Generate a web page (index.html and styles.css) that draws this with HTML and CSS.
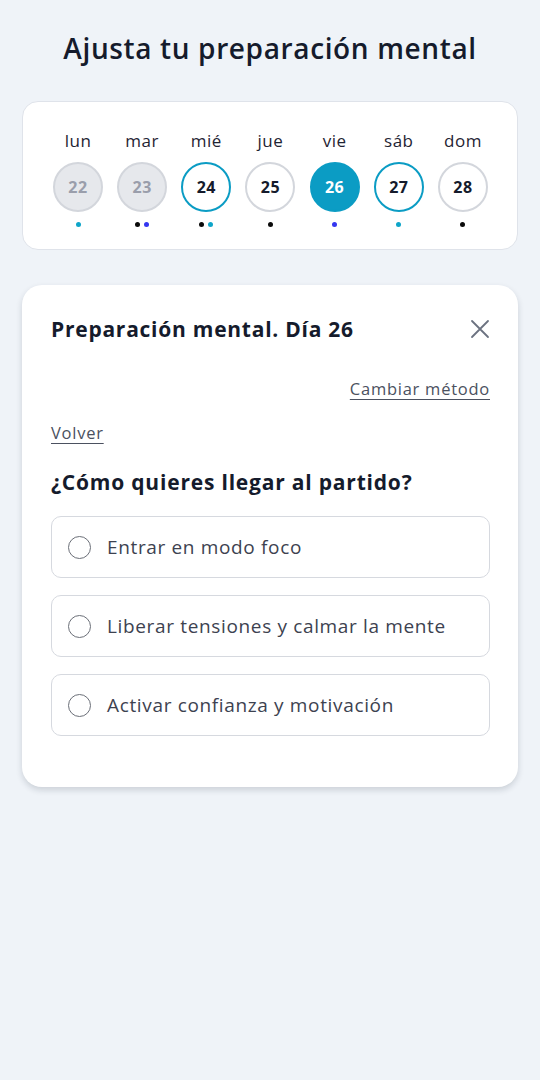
FILE: index.html
```html
<!DOCTYPE html>
<html lang="es">
<head>
<meta charset="utf-8">
<link rel="stylesheet" href="styles.css">
</head>
<body>
<main class="page">
  <h1 class="page-title">Ajusta tu preparación mental</h1>

  <section class="week-card">
    <div class="day">
      <span class="day-name">lun</span>
      <span class="day-num past">22</span>
      <span class="dots"><i class="dot cyan"></i></span>
    </div>
    <div class="day">
      <span class="day-name">mar</span>
      <span class="day-num past">23</span>
      <span class="dots"><i class="dot black"></i><i class="dot blue"></i></span>
    </div>
    <div class="day">
      <span class="day-name">mié</span>
      <span class="day-num marked">24</span>
      <span class="dots"><i class="dot black"></i><i class="dot cyan"></i></span>
    </div>
    <div class="day">
      <span class="day-name">jue</span>
      <span class="day-num">25</span>
      <span class="dots"><i class="dot black"></i></span>
    </div>
    <div class="day">
      <span class="day-name">vie</span>
      <span class="day-num selected">26</span>
      <span class="dots"><i class="dot blue"></i></span>
    </div>
    <div class="day">
      <span class="day-name">sáb</span>
      <span class="day-num marked">27</span>
      <span class="dots"><i class="dot cyan"></i></span>
    </div>
    <div class="day">
      <span class="day-name">dom</span>
      <span class="day-num">28</span>
      <span class="dots"><i class="dot black"></i></span>
    </div>
  </section>

  <section class="detail-card">
    <header class="detail-header">
      <h2 class="detail-title">Preparación mental. Día 26</h2>
      <button class="close-btn" aria-label="Cerrar">
        <svg width="20" height="20" viewBox="0 0 20 20" fill="none" stroke="#6b7280" stroke-width="1.8" stroke-linecap="round"><path d="M2 2L18 18M18 2L2 18"/></svg>
      </button>
    </header>
    <div class="change-row"><a class="link" href="#">Cambiar método</a></div>
    <div class="back-row"><a class="link" href="#">Volver</a></div>
    <h3 class="question">¿Cómo quieres llegar al partido?</h3>
    <div class="options">
      <label class="option"><span class="radio"></span><span class="option-text">Entrar en modo foco</span></label>
      <label class="option"><span class="radio"></span><span class="option-text">Liberar tensiones y calmar la mente</span></label>
      <label class="option"><span class="radio"></span><span class="option-text">Activar confianza y motivación</span></label>
    </div>
  </section>
</main>
</body>
</html>
```

FILE: styles.css
```css
* { box-sizing: border-box; }
html, body { margin: 0; padding: 0; }
body {
  background: #eff3f8;
  font-family: "Open Sans", "Noto Sans", sans-serif;
  color: #151b2c;
  width: 540px;
  height: 1080px;
}
.page {
  padding: 29px 22px 0 22px;
}
.page-title {
  margin: 0;
  text-align: center;
  font-size: 28px;
  font-weight: 600;
  line-height: 38px;
  letter-spacing: 0.63px;
  color: #151b2c;
}
.week-card {
  margin-top: 34px;
  height: 149px;
  background: #fff;
  border: 1px solid #dfe3ea;
  border-radius: 16px;
  display: flex;
  justify-content: space-between;
  padding: 27px 28px 0 29px;
}
.day {
  width: 52px;
  display: flex;
  flex-direction: column;
  align-items: center;
}
.day-name {
  font-size: 17px;
  line-height: 24px;
  color: #1f2433;
  letter-spacing: 0.5px;
}
.day-num {
  margin-top: 9px;
  width: 50px;
  height: 50px;
  border-radius: 50%;
  border: 2px solid #d3d6dc;
  background: #fff;
  display: flex;
  align-items: center;
  justify-content: center;
  font-size: 16px;
  font-weight: 700;
  color: #151b2c;
  letter-spacing: 0.5px;
}
.day-num.past {
  background: #e6e8ec;
  color: #9a9eab;
}
.day-num.marked {
  border: 2.5px solid #0b9cc4;
}
.day-num.selected {
  background: #0b9cc4;
  border-color: #0b9cc4;
  color: #fff;
}
.dots {
  margin-top: 10px;
  display: flex;
  gap: 4px;
  height: 6px;
}
.dot {
  width: 5px;
  height: 5px;
  border-radius: 50%;
  display: block;
}
.dot.cyan { background: #0ea5c9; }
.dot.black { background: #0a0a0a; }
.dot.blue { background: #3436f0; }

.detail-card {
  margin-top: 35px;
  background: #fff;
  border-radius: 20px;
  box-shadow: 0 3px 6px rgba(20, 30, 50, 0.16);
  padding: 28px 28px 51px 29px;
}
.detail-header {
  display: flex;
  justify-content: space-between;
  align-items: center;
  height: 32px;
}
.detail-title {
  margin: 0;
  font-size: 21px;
  font-weight: 700;
  color: #151b2c;
  letter-spacing: 0.75px;
}
.close-btn {
  border: 0;
  background: none;
  padding: 0;
  margin-right: 0;
  width: 20px;
  height: 20px;
  display: flex;
}
.change-row {
  margin-top: 32px;
  display: flex;
  justify-content: flex-end;
}
.back-row {
  margin-top: 20px;
}
.link {
  font-size: 16.5px;
  line-height: 24px;
  color: #4b5160;
  text-decoration: underline;
  text-underline-offset: 4px;
  letter-spacing: 0.75px;
}
.question {
  margin: 23px 0 0 0;
  font-size: 21px;
  font-weight: 700;
  line-height: 28px;
  color: #151b2c;
  letter-spacing: 0.8px;
}
.options {
  margin-top: 20px;
  display: flex;
  flex-direction: column;
  gap: 17px;
}
.option {
  height: 62px;
  border: 1px solid #d6d9df;
  border-radius: 10px;
  display: flex;
  align-items: center;
  padding-left: 16px;
  gap: 16px;
}
.radio {
  width: 23px;
  height: 23px;
  border: 1.5px solid #6b6f78;
  border-radius: 50%;
  flex: none;
}
.option-text {
  font-size: 19px;
  color: #3d4250;
  letter-spacing: 0.65px;
}
```
